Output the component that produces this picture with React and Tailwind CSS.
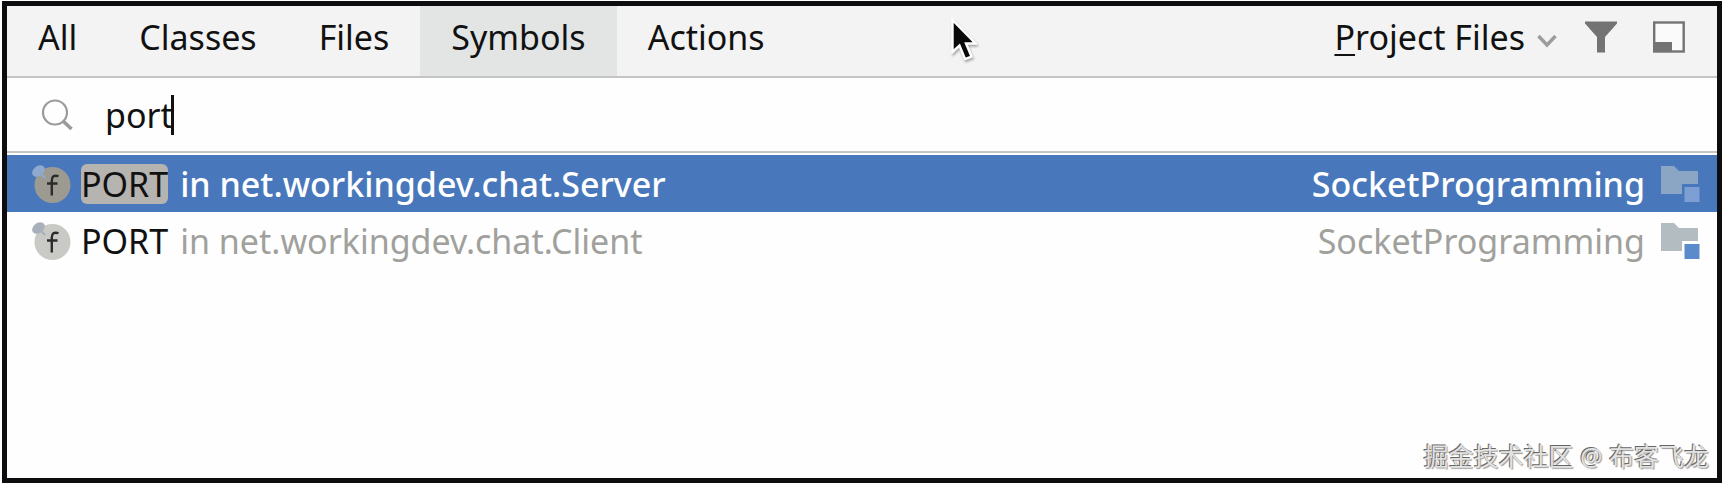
import { useState } from 'react';

const tabs = ['All', 'Classes', 'Files', 'Symbols', 'Actions'];

const results = [
  { name: 'PORT', location: 'in net.workingdev.chat.Server', module: 'SocketProgramming' },
  { name: 'PORT', location: 'in net.workingdev.chat.Client', module: 'SocketProgramming' },
];

function SearchIcon() {
  return (
    <svg width="32" height="32" viewBox="0 0 32 32" fill="none" stroke="#9a9a9a" aria-hidden="true">
      <circle cx="14" cy="13.5" r="12" strokeWidth="2.2" />
      <path d="M22 22 L30.5 30" strokeWidth="3.6" />
    </svg>
  );
}

function FilterIcon() {
  return (
    <svg width="32" height="32" viewBox="0 0 32 32" fill="#737373" aria-hidden="true">
      <path d="M0 0.5 H32 V2.5 L20 16 V31.5 H12 V16 L0 2.5 Z" />
    </svg>
  );
}

function ToolWindowIcon() {
  return (
    <svg width="32" height="32" viewBox="0 0 32 32" aria-hidden="true">
      <rect x="1.2" y="1.5" width="29.5" height="29" fill="#fafafa" stroke="#737373" strokeWidth="2.4" />
      <rect x="1" y="21" width="18" height="9.5" fill="#737373" />
    </svg>
  );
}

function FieldIcon({ selected }) {
  const pin = selected ? '#8ea9cd' : '#a9b0bb';
  return (
    <svg width="40" height="40" viewBox="0 0 40 40" aria-hidden="true">
      <circle cx="21.5" cy="21" r="18" fill={selected ? '#9d9a92' : '#c9c9c6'} />
      <ellipse cx="7.5" cy="7" rx="7" ry="5" transform="rotate(-38 7.5 7)" fill={pin} />
      <path d="M10 10 L14 14" stroke={pin} strokeWidth="2" />
      <path d="M27.5 12.2 C23 10.8 20.8 12.6 20.8 16.5 V31.5 M16 19.5 H26.5" fill="none" stroke="#2b2b2b" strokeWidth="2.4" />
    </svg>
  );
}

function ModuleIcon({ selected }) {
  return (
    <svg width="40" height="36" viewBox="0 0 40 36" aria-hidden="true">
      <path d="M0 0 H13 L18 5 H37 V18 H21 V28 H0 Z" fill={selected ? '#8aa6c4' : '#b3bcc1'} />
      <rect x="23.5" y="21" width="15" height="15" fill={selected ? '#7d9fd3' : '#5b8bcb'} />
    </svg>
  );
}

function Pointer() {
  return (
    <svg
      className="pointer-events-none absolute top-3 left-[55.2%] drop-shadow-[1px_2px_1px_rgba(0,0,0,0.3)]"
      width="26"
      height="44"
      viewBox="0 0 26 44"
      aria-hidden="true"
    >
      <path d="M1.5 2 V34 L8.5 27.5 L14 41 L20.5 38.5 L15 25.5 H24.5 Z" fill="#0a0a0a" stroke="#fff" strokeWidth="2.4" />
    </svg>
  );
}

export default function App() {
  const [activeTab, setActiveTab] = useState('Symbols');
  const [query, setQuery] = useState('port');
  const [selected, setSelected] = useState(0);

  return (
    <div className="min-h-screen flex bg-white pt-px pl-0.5 pr-[3px] pb-[3px] font-['Noto_Sans','Noto_Sans_CJK_SC',sans-serif] text-[34px] leading-10 text-[#111]">
      <main className="relative flex-1 flex flex-col border-[5px] border-[#0d0d0f] bg-[#fefefe]">
        <header className="flex items-stretch justify-between h-18 border-b-2 border-[#c4c4c4] bg-[#f3f3f3]">
          <div role="tablist" className="flex">
            {tabs.map((tab) => (
              <button
                key={tab}
                role="tab"
                aria-selected={tab === activeTab}
                onClick={() => setActiveTab(tab)}
                className={`px-[31px] pb-2 ${tab === activeTab ? 'bg-[#e3e5e5]' : ''}`}
              >
                {tab}
              </button>
            ))}
          </div>
          <div className="flex items-center pr-8 pb-2">
            <button className="flex items-center gap-3">
              <span>
                <span className="underline decoration-2 underline-offset-4">P</span>roject Files
              </span>
              <svg width="20" height="14" viewBox="0 0 20 14" fill="none" stroke="#9c9c9c" strokeWidth="3.4" className="mt-2" aria-hidden="true">
                <path d="M1.5 2 L10 11 L18.5 2" />
              </svg>
            </button>
            <button aria-label="Filter" className="ml-7">
              <FilterIcon />
            </button>
            <button aria-label="Open in tool window" className="ml-9">
              <ToolWindowIcon />
            </button>
          </div>
        </header>

        <label className="flex items-center h-[75px] pl-[34px] border-b-2 border-[#c4c4c4]">
          <SearchIcon />
          <input
            aria-label="Search"
            value={query}
            onChange={(e) => setQuery(e.target.value)}
            className="field-sizing-content ml-8 outline-none caret-transparent"
          />
          <span className="w-[3px] h-10 -ml-0.5 bg-[#111]" />
        </label>

        <ul className="pt-0.5">
          {results.map((result, i) => {
            const active = i === selected;
            return (
              <li key={result.location}>
                <button
                  onClick={() => setSelected(i)}
                  className={`flex items-center w-full h-[57px] pl-6 pr-4 ${active ? 'bg-[#4878bb] text-white' : 'text-[#a0a09c]'}`}
                >
                  <FieldIcon selected={active} />
                  <span
                    className={`ml-2.5 rounded-md text-[#111] ${active ? 'bg-[#b5b4b0]' : ''}`}
                  >
                    {result.name}
                  </span>
                  <span className={`ml-3 ${active ? 'font-medium' : ''}`}>{result.location}</span>
                  <span className={`ml-auto mr-4 ${active ? 'font-medium' : ''}`}>{result.module}</span>
                  <ModuleIcon selected={active} />
                </button>
              </li>
            );
          })}
        </ul>

        <Pointer />
        <p className="absolute right-2 bottom-0.5 text-[25px] text-[#e2e2e2] [text-shadow:-1px_-1px_0_#666,1px_1px_1px_#999]">
          掘金技术社区 @ 布客飞龙
        </p>
      </main>
    </div>
  );
}
